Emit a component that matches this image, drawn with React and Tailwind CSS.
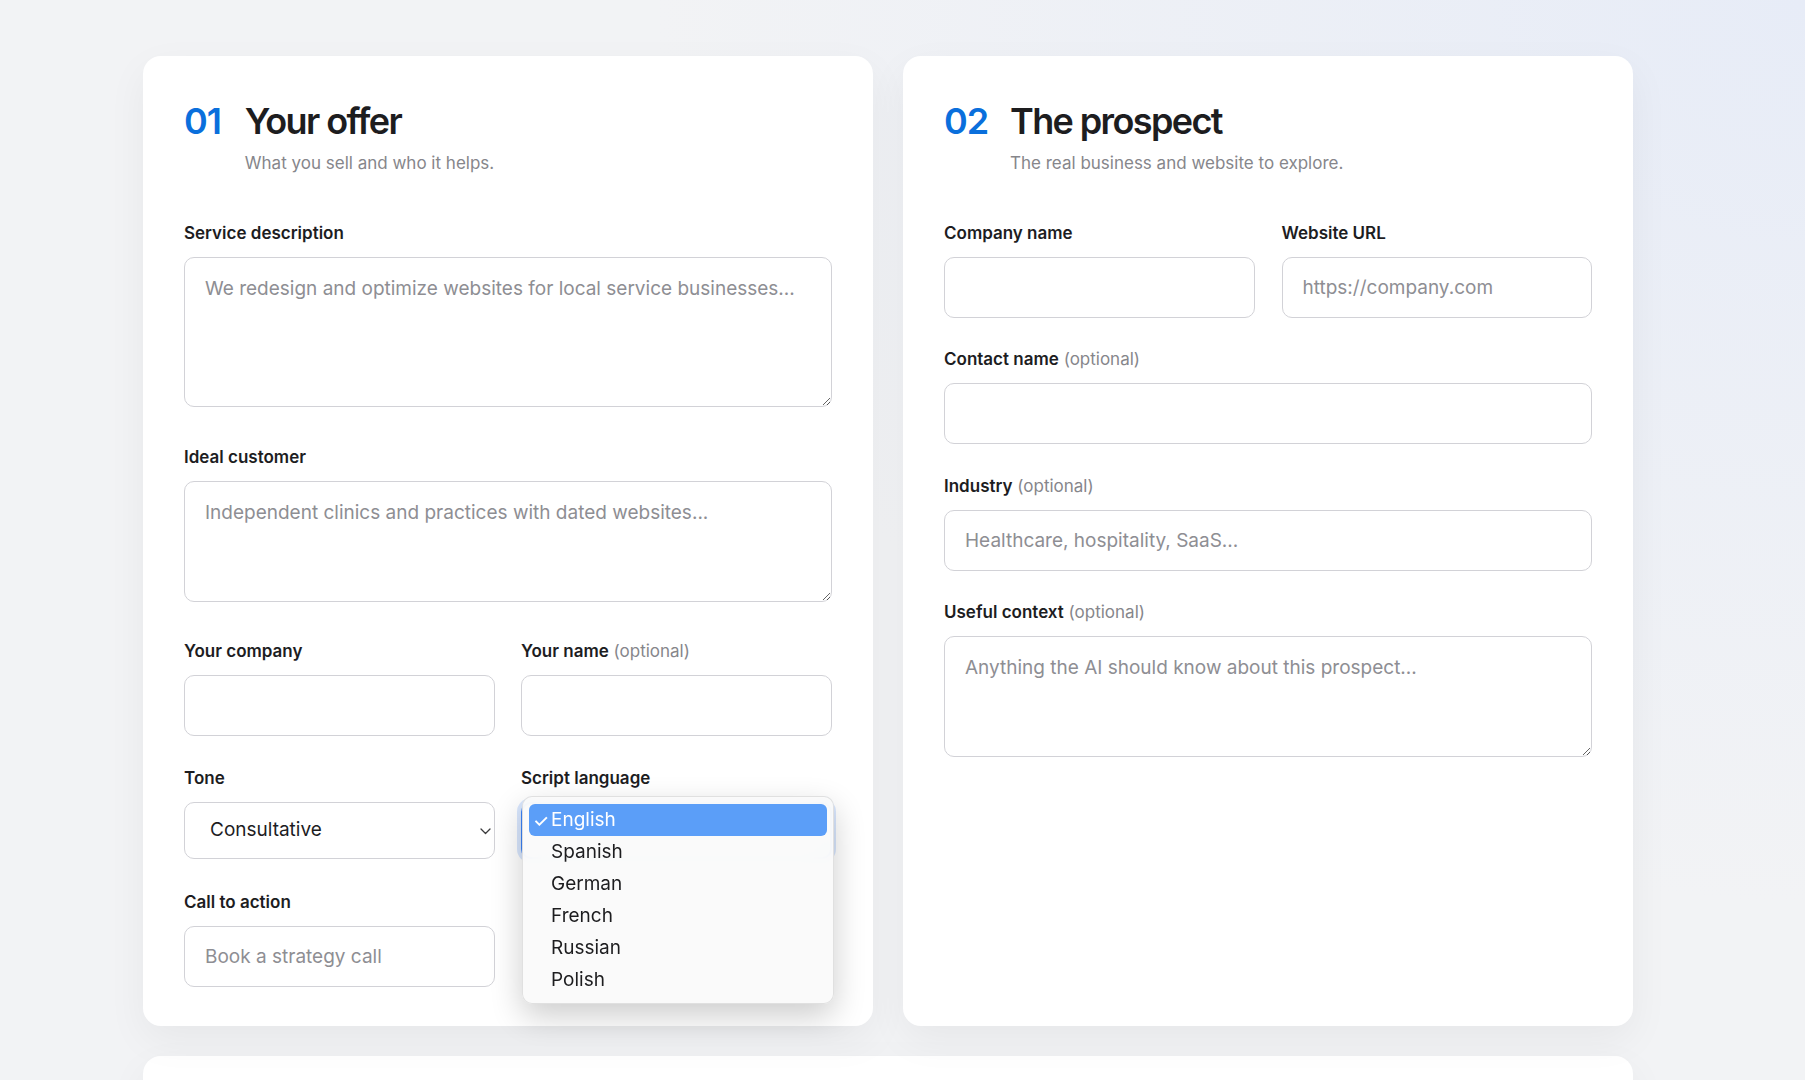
import { useState } from "react";

function Label({ children, optional }) {
  return (
    <label className="block h-5 mb-[14px] text-[17px] leading-5 font-semibold text-[#1d1d1f]">
      {children}
      {optional && (
        <span className="font-normal text-[#86868b]"> (optional)</span>
      )}
    </label>
  );
}

const inputCls =
  "block w-full h-[61px] rounded-[10px] border border-[#d2d2d7] bg-white px-5 text-[19px] text-[#1d1d1f] placeholder:text-[#8e8e93] outline-none";

const areaCls =
  "block w-full rounded-[10px] border border-[#d2d2d7] bg-white px-5 pt-[17px] text-[19px] leading-[28px] text-[#1d1d1f] placeholder:text-[#8e8e93] outline-none";

function Heading({ num, title, sub, gap }) {
  return (
    <div className={"flex " + gap}>
      <span className="text-[36px] leading-[40px] font-semibold tracking-[-0.03em] text-[#0a6fdc]">
        {num}
      </span>
      <div>
        <h2 className="text-[36px] leading-[40px] font-semibold tracking-[-0.045em] text-[#1d1d1f]">
          {title}
        </h2>
        <p className="mt-[10px] text-[17px] leading-6 text-[#86868b]">{sub}</p>
      </div>
    </div>
  );
}

const languages = ["English", "Spanish", "German", "French", "Russian", "Polish"];

function LanguageMenu({ value }) {
  return (
    <div className="absolute left-px top-[28px] z-10 w-[312px] rounded-[10px] border border-black/10 bg-[#fafafa]/95 px-[6px] pt-[7px] pb-[7px] backdrop-blur-md shadow-[0_12px_32px_rgba(0,0,0,0.2)]">
      {languages.map((lang) => (
        <div
          key={lang}
          className={
            "flex h-8 items-center rounded-[6px] text-[19px] " +
            (lang === value ? "bg-[#5b9ef8] text-white" : "text-[#1d1d1f]")
          }
        >
          <span className="w-[22px] pl-[4px] text-[18px] font-medium">
            {lang === value ? "✓" : ""}
          </span>
          {lang}
        </div>
      ))}
    </div>
  );
}

export default function App() {
  const [tone, setTone] = useState("Consultative");

  return (
    <div className="min-h-screen bg-[#f2f3f5] bg-[radial-gradient(ellipse_at_top_right,#e7ecf7_0%,#f2f3f5_45%)] font-['Inter','Noto_Sans',sans-serif] pt-[56px] pb-10">
      <div className="ml-[143px] w-[1490px]">
        <div className="grid grid-cols-2 gap-[30px]">
          {/* offer */}
          <section className="rounded-[18px] bg-white px-[41px] pt-[45px] pb-[39px] shadow-[0_14px_40px_rgba(0,0,0,0.05)]">
            <Heading
              num="01"
              title="Your offer"
              sub="What you sell and who it helps."
              gap="gap-[24px]"
            />

            <div className="mt-[48px]">
              <Label>Service description</Label>
              <textarea
                className={areaCls + " h-[150px]"}
                placeholder="We redesign and optimize websites for local service businesses..."
              />
            </div>

            <div className="mt-[40px]">
              <Label>Ideal customer</Label>
              <textarea
                className={areaCls + " h-[121px]"}
                placeholder="Independent clinics and practices with dated websites..."
              />
            </div>

            <div className="mt-[39px] grid grid-cols-2 gap-x-[26px]">
              <div>
                <Label>Your company</Label>
                <input className={inputCls} />
              </div>
              <div>
                <Label optional>Your name</Label>
                <input className={inputCls} />
              </div>
            </div>

            <div className="mt-[32px] grid grid-cols-2 gap-x-[26px]">
              <div>
                <Label>Tone</Label>
                <div className="relative">
                  <select
                    value={tone}
                    onChange={(e) => setTone(e.target.value)}
                    className="block w-full h-[57px] appearance-none rounded-[10px] border border-[#d2d2d7] bg-white pl-[25px] text-[19px] text-[#1d1d1f] outline-none"
                  >
                    <option>Consultative</option>
                    <option>Friendly</option>
                    <option>Direct</option>
                  </select>
                  <svg
                    className="pointer-events-none absolute right-[4px] top-[26px]"
                    width="11"
                    height="7"
                    viewBox="0 0 11 7"
                    fill="none"
                  >
                    <path d="M1 1l4.5 4.5L10 1" stroke="#3a3a3c" strokeWidth="1.3" strokeLinecap="round" strokeLinejoin="round" />
                  </svg>
                </div>
              </div>
              <div className="relative">
                <Label>Script language</Label>
                <div className="h-[57px] rounded-[10px] border-2 border-[#3b82f6] bg-white ring-4 ring-[#3b82f6]/20" />
                <LanguageMenu value="English" />
              </div>
            </div>

            <div className="mt-[33px] grid grid-cols-2 gap-x-[26px]">
              <div>
                <Label>Call to action</Label>
                <input className={inputCls} placeholder="Book a strategy call" />
              </div>
              <div />
            </div>
          </section>

          {/* prospect */}
          <section className="rounded-[18px] bg-white px-[41px] pt-[45px] pb-[39px] shadow-[0_14px_40px_rgba(0,0,0,0.05)]">
            <Heading
              num="02"
              title="The prospect"
              sub="The real business and website to explore."
              gap="gap-[22px]"
            />

            <div className="mt-[48px] grid grid-cols-2 gap-x-[27px]">
              <div>
                <Label>Company name</Label>
                <input className={inputCls} />
              </div>
              <div>
                <Label>Website URL</Label>
                <input className={inputCls} placeholder="https://company.com" />
              </div>
            </div>

            <div className="mt-[31px]">
              <Label optional>Contact name</Label>
              <input className={inputCls} />
            </div>

            <div className="mt-[32px]">
              <Label optional>Industry</Label>
              <input className={inputCls} placeholder="Healthcare, hospitality, SaaS..." />
            </div>

            <div className="mt-[31px]">
              <Label optional>Useful context</Label>
              <textarea
                className={areaCls + " h-[121px]"}
                placeholder="Anything the AI should know about this prospect..."
              />
            </div>
          </section>
        </div>

        {/* next step */}
        <section className="mt-[30px] h-[320px] rounded-[18px] bg-white shadow-[0_14px_40px_rgba(0,0,0,0.05)]" />
      </div>
    </div>
  );
}
